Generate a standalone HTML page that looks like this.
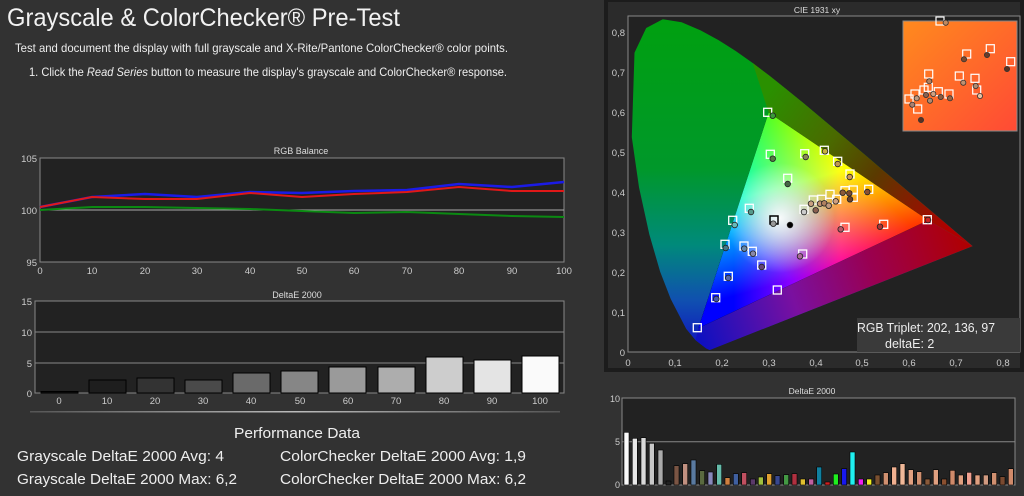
<!DOCTYPE html>
<html><head><meta charset="utf-8"><style>
html,body{margin:0;padding:0;background:#323232;width:1024px;height:496px;overflow:hidden}
svg{display:block}
text{font-family:"Liberation Sans",sans-serif}
</style></head><body>
<svg width="1024" height="496" viewBox="0 0 1024 496" xmlns="http://www.w3.org/2000/svg">
<defs>
<linearGradient id="lbase" gradientUnits="userSpaceOnUse" x1="0" y1="20" x2="0" y2="350"><stop offset="0" stop-color="#00a010"/><stop offset="0.45" stop-color="#00982a"/><stop offset="0.68" stop-color="#008a7a"/><stop offset="0.85" stop-color="#1050b0"/><stop offset="1" stop-color="#1010c0"/></linearGradient>
<linearGradient id="lright" gradientUnits="userSpaceOnUse" x1="770" y1="90" x2="950" y2="225"><stop offset="0" stop-color="#2a9000"/><stop offset="0.35" stop-color="#4a6a00"/><stop offset="0.6" stop-color="#5a3a00"/><stop offset="1" stop-color="#b00000"/></linearGradient>
<linearGradient id="lbot" gradientUnits="userSpaceOnUse" x1="700" y1="335" x2="970" y2="245"><stop offset="0" stop-color="#1010c0"/><stop offset="0.35" stop-color="#7a10a0"/><stop offset="0.65" stop-color="#9a0050"/><stop offset="1" stop-color="#b00000"/></linearGradient>
<linearGradient id="gR" gradientUnits="userSpaceOnUse" x1="928.2" y1="220.3" x2="733.5" y2="220.3"><stop offset="0" stop-color="#f00"/><stop offset="0.45" stop-color="#f00"/><stop offset="1" stop-color="#000"/></linearGradient>
<linearGradient id="gG" gradientUnits="userSpaceOnUse" x1="768.7" y1="112.6" x2="813.3" y2="274.2"><stop offset="0" stop-color="#0f0"/><stop offset="0.45" stop-color="#0f0"/><stop offset="1" stop-color="#000"/></linearGradient>
<linearGradient id="gB" gradientUnits="userSpaceOnUse" x1="698.4" y1="328.1" x2="848.5" y2="166.5"><stop offset="0" stop-color="#00f"/><stop offset="0.45" stop-color="#00f"/><stop offset="1" stop-color="#000"/></linearGradient>
<radialGradient id="wp" gradientUnits="userSpaceOnUse" cx="780" cy="218" r="55"><stop offset="0" stop-color="#fff" stop-opacity="0.95"/><stop offset="1" stop-color="#fff" stop-opacity="0"/></radialGradient>
<linearGradient id="ins" x1="0" y1="0" x2="1" y2="1"><stop offset="0" stop-color="#ff8a1e"/><stop offset="1" stop-color="#ff4a35"/></linearGradient>
<linearGradient id="sep" x1="0" x2="1"><stop offset="0" stop-color="#555"/><stop offset="0.5" stop-color="#bbb"/><stop offset="1" stop-color="#555"/></linearGradient>
</defs>

<text x="7" y="26" font-size="25" fill="#f2f2f2" textLength="393" lengthAdjust="spacingAndGlyphs">Grayscale &amp; ColorChecker® Pre-Test</text>
<text x="15" y="52" font-size="12" fill="#eee" textLength="493" lengthAdjust="spacingAndGlyphs">Test and document the display with full grayscale and X-Rite/Pantone ColorChecker® color points.</text>
<text x="29" y="76" font-size="12" fill="#eee" textLength="478" lengthAdjust="spacingAndGlyphs">1. Click the <tspan font-style="italic">Read Series</tspan> button to measure the display's grayscale and ColorChecker® response.</text>

<text x="301" y="154" font-size="9" fill="#ddd" text-anchor="middle">RGB Balance</text>
<rect x="40" y="158" width="524" height="104" fill="#222" stroke="#888" stroke-width="1"/>
<line x1="40" y1="210" x2="564" y2="210" stroke="#aaa" stroke-width="1"/>
<g font-size="9.5" fill="#ccc" text-anchor="end"><text x="37" y="162">105</text><text x="37" y="214">100</text><text x="37" y="266">95</text></g>
<g font-size="9.5" fill="#ccc" text-anchor="middle">
<text x="40" y="274">0</text><text x="92" y="274">10</text><text x="145" y="274">20</text><text x="197" y="274">30</text><text x="250" y="274">40</text><text x="302" y="274">50</text><text x="354" y="274">60</text><text x="407" y="274">70</text><text x="459" y="274">80</text><text x="512" y="274">90</text><text x="564" y="274">100</text></g>
<polyline fill="none" stroke="#0b8a12" stroke-width="2" points="40,210 92,207 145,207 197,208 250,209 302,211 354,213 407,212 459,214 512,216 564,217"/>
<polyline fill="none" stroke="#1b1be6" stroke-width="2.5" points="40,207 92,197 145,194 197,197 250,192 302,193 354,191 407,190 459,184 512,187 564,182"/>
<polyline fill="none" stroke="#e01818" stroke-width="2" points="40,207 92,197 145,199 197,199 250,193 302,197 354,194 407,192 459,187 512,191 564,191"/>

<text x="297" y="298" font-size="9" fill="#ddd" text-anchor="middle">DeltaE 2000</text>
<rect x="35" y="301" width="529" height="92" fill="#222" stroke="#888"/>
<g stroke="#888"><line x1="35" y1="332" x2="564" y2="332"/><line x1="35" y1="363" x2="564" y2="363"/></g>
<g font-size="9.5" fill="#ccc" text-anchor="end"><text x="32" y="305">15</text><text x="32" y="336">10</text><text x="32" y="367">5</text><text x="32" y="397">0</text></g>
<g stroke="#000" stroke-width="1">
<rect x="41" y="391.5" width="37" height="1.5" fill="#111"/>
<rect x="89" y="380" width="37" height="13" fill="#1e1e1e"/>
<rect x="137" y="378" width="37" height="15" fill="#333"/>
<rect x="185" y="380" width="37" height="13" fill="#4a4a4a"/>
<rect x="233" y="373" width="37" height="20" fill="#6a6a6a"/>
<rect x="281" y="371" width="37" height="22" fill="#868686"/>
<rect x="329" y="367" width="37" height="26" fill="#9a9a9a"/>
<rect x="378" y="367" width="37" height="26" fill="#adadad"/>
<rect x="426" y="357" width="37" height="36" fill="#cdcdcd"/>
<rect x="474" y="360" width="37" height="33" fill="#e4e4e4"/>
<rect x="522" y="356" width="37" height="37" fill="#fafafa"/>
</g>
<g font-size="9.5" fill="#ccc" text-anchor="middle">
<text x="59" y="404">0</text><text x="107" y="404">10</text><text x="155" y="404">20</text><text x="203" y="404">30</text><text x="251" y="404">40</text><text x="300" y="404">50</text><text x="348" y="404">60</text><text x="396" y="404">70</text><text x="444" y="404">80</text><text x="492" y="404">90</text><text x="540" y="404">100</text></g>
<rect x="30" y="411" width="530" height="1.5" fill="url(#sep)"/>

<text x="234" y="438" font-size="14.5" fill="#eee" textLength="126" lengthAdjust="spacingAndGlyphs">Performance Data</text>
<g font-size="14.5" fill="#eee">
<text x="17" y="461" textLength="207" lengthAdjust="spacingAndGlyphs">Grayscale DeltaE 2000 Avg:  4</text>
<text x="280" y="461" textLength="246" lengthAdjust="spacingAndGlyphs">ColorChecker DeltaE 2000 Avg:  1,9</text>
<text x="17" y="484" textLength="220" lengthAdjust="spacingAndGlyphs">Grayscale DeltaE 2000 Max: 6,2</text>
<text x="280" y="484" textLength="246" lengthAdjust="spacingAndGlyphs">ColorChecker DeltaE 2000 Max: 6,2</text>
</g>

<rect x="604" y="0" width="420" height="372" fill="#1c1c1c"/>
<rect x="608" y="2" width="412" height="366" fill="#2b2b2b"/>
<text x="817" y="13" font-size="8.5" fill="#ddd" text-anchor="middle">CIE 1931 xy</text>
<rect x="628" y="16" width="392" height="336" fill="#222" stroke="#888"/>
<path fill="url(#lbase)" d="M709.7,350 L706.1,348.4 L695.5,340.1 L686.2,328.9 L670.8,299.1 L660.2,271.9 L649.3,234.3 L639,187.3 L631.8,137.2 L634.5,52.7 L646.2,28 L662.8,19.3 L681.6,22.3 L700.6,30.4 L718.5,40.1 L735.7,51 L752.7,63 L769.5,75.8 L786.2,89.1 L803,102.8 L819.7,116.7 L836.3,130.7 L852.6,144.4 L868.4,157.8 L883.5,170.7 L897.8,182.7 L910.8,193.8 L922.1,203.4 L932,211.8 L940.3,218.7 L952.3,229 L972.6,246.1 Z"/>
<path fill="url(#lright)" d="M768.7,112.6 L752.7,63 L769.5,75.8 L786.2,89.1 L803,102.8 L819.7,116.7 L836.3,130.7 L852.6,144.4 L868.4,157.8 L883.5,170.7 L897.8,182.7 L910.8,193.8 L922.1,203.4 L932,211.8 L940.3,218.7 L952.3,229 L972.6,246.1 L928.2,220.3 Z"/>
<path fill="url(#lbot)" d="M698.4,328.1 L928.2,220.3 L972.6,246.1 L709.7,350 L706.1,348.4 L695.5,340.1 Z"/>
<g style="isolation:isolate">
<polygon points="928.2,220.3 768.7,112.6 698.4,328.1" fill="url(#gR)"/>
<polygon points="928.2,220.3 768.7,112.6 698.4,328.1" fill="url(#gG)" style="mix-blend-mode:screen"/>
<polygon points="928.2,220.3 768.7,112.6 698.4,328.1" fill="url(#gB)" style="mix-blend-mode:screen"/>
</g>
<clipPath id="tri"><polygon points="928.2,220.3 768.7,112.6 698.4,328.1"/></clipPath>
<rect x="700" y="110" width="230" height="220" fill="url(#wp)" clip-path="url(#tri)"/>
<g font-size="9.5" fill="#ccc" text-anchor="end">
<text x="625" y="36">0,8</text><text x="625" y="76">0,7</text><text x="625" y="116">0,6</text><text x="625" y="156">0,5</text><text x="625" y="196">0,4</text><text x="625" y="236">0,3</text><text x="625" y="276">0,2</text><text x="625" y="316">0,1</text><text x="625" y="356">0</text></g>
<g font-size="9.5" fill="#ccc" text-anchor="middle">
<text x="628" y="366">0</text><text x="675" y="366">0,1</text><text x="722" y="366">0,2</text><text x="769" y="366">0,3</text><text x="816" y="366">0,4</text><text x="862" y="366">0,5</text><text x="909" y="366">0,6</text><text x="956" y="366">0,7</text><text x="1003" y="366">0,8</text></g>
<g fill="none" stroke="#fff" stroke-width="1.3">
<rect x="763.7" y="108.3" width="8" height="8"/><rect x="766.3" y="150.3" width="8" height="8"/><rect x="800.7" y="149.7" width="8" height="8"/><rect x="820.3" y="146.3" width="8" height="8"/><rect x="833.7" y="157.3" width="8" height="8"/><rect x="846" y="170" width="8" height="8"/><rect x="783.7" y="174.3" width="8" height="8"/><rect x="745.3" y="204.3" width="8" height="8"/><rect x="728.7" y="216.3" width="8" height="8"/><rect x="721" y="240.3" width="8" height="8"/><rect x="724.3" y="272.3" width="8" height="8"/><rect x="711.7" y="293.7" width="8" height="8"/><rect x="693.3" y="323.7" width="8" height="8"/><rect x="740" y="242" width="8" height="8"/><rect x="748.3" y="247.3" width="8" height="8"/><rect x="757.7" y="261" width="8" height="8"/><rect x="773.3" y="286" width="8" height="8"/><rect x="798.7" y="250" width="8" height="8"/><rect x="841" y="223.3" width="8" height="8"/><rect x="879.7" y="220.3" width="8" height="8"/><rect x="923.3" y="215.7" width="8" height="8"/><rect x="800" y="205.3" width="8" height="8"/><rect x="809.3" y="196" width="8" height="8"/><rect x="817.7" y="195.3" width="8" height="8"/><rect x="826" y="190.3" width="8" height="8"/><rect x="832.7" y="195.3" width="8" height="8"/><rect x="841" y="186.7" width="8" height="8"/><rect x="849.3" y="186" width="8" height="8"/><rect x="849.3" y="193.3" width="8" height="8"/><rect x="864.7" y="185.3" width="8" height="8"/>
</g>
<rect x="770" y="216" width="8" height="8" fill="none" stroke="#000" stroke-width="1.5"/>
<g stroke="#222" stroke-width="0.8">
<circle cx="772.7" cy="115.7" r="2.8" fill="#3a9a3a"/><circle cx="772.7" cy="158.7" r="2.8" fill="#557744"/><circle cx="805.7" cy="157" r="2.8" fill="#888855"/><circle cx="825" cy="151.3" r="2.8" fill="#c8b040"/><circle cx="837.7" cy="164" r="2.8" fill="#c09a50"/><circle cx="849.7" cy="177" r="2.8" fill="#d09a50"/><circle cx="787.7" cy="184" r="2.8" fill="#446644"/><circle cx="751" cy="212" r="2.8" fill="#55998a"/><circle cx="734.7" cy="225" r="2.8" fill="#66bbbb"/><circle cx="725.7" cy="248" r="2.8" fill="#447788"/><circle cx="728.3" cy="278" r="2.8" fill="#5566aa"/><circle cx="716.3" cy="299" r="2.8" fill="#4455aa"/><circle cx="744.3" cy="248.7" r="2.8" fill="#6688aa"/><circle cx="753" cy="253.7" r="2.8" fill="#8888aa"/><circle cx="761.7" cy="267" r="2.8" fill="#664477"/><circle cx="800" cy="256.3" r="2.8" fill="#aa6699"/><circle cx="840.7" cy="229.3" r="2.8" fill="#bb5566"/><circle cx="880" cy="226.7" r="2.8" fill="#aa3333"/><circle cx="928" cy="220" r="2.8" fill="#cc2222"/><circle cx="804" cy="212" r="2.8" fill="#ccc"/><circle cx="811" cy="203.7" r="2.8" fill="#c8a080"/><circle cx="815.7" cy="210.3" r="2.8" fill="#8a6050"/><circle cx="820" cy="203.7" r="2.8" fill="#c09070"/><circle cx="824.3" cy="203.3" r="2.8" fill="#b08060"/><circle cx="828.7" cy="205.7" r="2.8" fill="#c09a80"/><circle cx="835.7" cy="201.3" r="2.8" fill="#d0a080"/><circle cx="842.7" cy="192.7" r="2.8" fill="#8a5a3a"/><circle cx="849.3" cy="193.3" r="2.8" fill="#7a4a30"/><circle cx="850" cy="199.3" r="2.8" fill="#6a4028"/><circle cx="867.3" cy="192" r="2.8" fill="#8a5030"/><circle cx="773.3" cy="223.7" r="2.8" fill="#999"/><circle cx="790" cy="225" r="2.8" fill="#000"/>
</g>
<rect x="903" y="21" width="114" height="110" fill="url(#ins)" stroke="#888"/>
<g fill="none" stroke="#fff" stroke-width="1.2">
<rect x="936" y="17" width="8" height="8"/><rect x="962.7" y="50" width="8" height="8"/><rect x="986.3" y="44.7" width="8" height="8"/><rect x="1006.7" y="57.7" width="8" height="8"/><rect x="924.7" y="70" width="8" height="8"/><rect x="955.3" y="72" width="8" height="8"/><rect x="971" y="74.3" width="8" height="8"/><rect x="905" y="95" width="8" height="8"/><rect x="911" y="90" width="8" height="8"/><rect x="920" y="86" width="8" height="8"/><rect x="924.3" y="83.3" width="8" height="8"/><rect x="934.3" y="87.7" width="8" height="8"/><rect x="945" y="90" width="8" height="8"/><rect x="913.7" y="105" width="8" height="8"/><rect x="972.7" y="86" width="8" height="8"/>
</g>
<g stroke="#333" stroke-width="0.8">
<circle cx="945.7" cy="22.7" r="2.6" fill="#c08a60"/><circle cx="964" cy="59.3" r="2.6" fill="#7a4a30"/><circle cx="987" cy="55" r="2.6" fill="#6a3a28"/><circle cx="1007" cy="69" r="2.6" fill="#5a3020"/><circle cx="929.3" cy="81.3" r="2.6" fill="#b08060"/><circle cx="963.3" cy="82.7" r="2.6" fill="#c09070"/><circle cx="975.7" cy="86" r="2.6" fill="#b08a70"/><circle cx="916.7" cy="98.3" r="2.6" fill="#c09a80"/><circle cx="912.3" cy="104.7" r="2.6" fill="#aa8070"/><circle cx="926" cy="95" r="2.6" fill="#8a6050"/><circle cx="930" cy="100.7" r="2.6" fill="#b08a70"/><circle cx="933.3" cy="94" r="2.6" fill="#d0a080"/><circle cx="940.7" cy="97" r="2.6" fill="#8a5a40"/><circle cx="950" cy="98.3" r="2.6" fill="#9a6040"/><circle cx="980" cy="96" r="2.6" fill="#e8c0a0"/><circle cx="921" cy="120" r="2.6" fill="#5a3020"/>
</g>
<rect x="857" y="318" width="163" height="34" fill="#3a3a3a"/>
<text x="857" y="332" font-size="12.5" fill="#eee" textLength="138" lengthAdjust="spacingAndGlyphs">RGB Triplet: 202, 136, 97</text>
<text x="885" y="348" font-size="12.5" fill="#eee">deltaE: 2</text>

<text x="812" y="394" font-size="8.5" fill="#ddd" text-anchor="middle">DeltaE 2000</text>
<rect x="622" y="398" width="393" height="87" fill="#222" stroke="#888"/>
<line x1="622" y1="441.7" x2="1015" y2="441.7" stroke="#888"/>
<g font-size="9" fill="#ccc" text-anchor="end"><text x="620" y="402">10</text><text x="620" y="445">5</text><text x="620" y="488">0</text></g>
<g stroke="#000" stroke-width="0.6">
<rect x="624" y="432.3" width="5" height="52.7" fill="#fafafa"/>
<rect x="632.3" y="438.3" width="5" height="46.7" fill="#e8e8e8"/>
<rect x="641" y="437.7" width="5" height="47.3" fill="#dadada"/>
<rect x="649.3" y="443.3" width="5" height="41.7" fill="#c8c8c8"/>
<rect x="658" y="450" width="5" height="35" fill="#aaa"/>
<rect x="666" y="481" width="5" height="4" fill="#222"/>
<rect x="674" y="465.7" width="5" height="19.3" fill="#7a5544"/>
<rect x="682.7" y="463.7" width="5" height="21.3" fill="#c09080"/>
<rect x="691" y="460" width="5" height="25" fill="#5a7aa0"/>
<rect x="699.7" y="470.7" width="5" height="14.3" fill="#5a6a40"/>
<rect x="708" y="472" width="5" height="13" fill="#8888bb"/>
<rect x="716.7" y="464.3" width="5" height="20.7" fill="#66bbaa"/>
<rect x="725" y="477.7" width="5" height="7.3" fill="#d08040"/>
<rect x="733.3" y="473.7" width="5" height="11.3" fill="#4060a0"/>
<rect x="741.7" y="472.7" width="5" height="12.3" fill="#c05060"/>
<rect x="750.3" y="479" width="5" height="6" fill="#5a3a6a"/>
<rect x="758.3" y="477" width="5" height="8" fill="#a0c040"/>
<rect x="766.7" y="473.7" width="5" height="11.3" fill="#e0a030"/>
<rect x="775" y="475.7" width="5" height="9.3" fill="#384890"/>
<rect x="783.7" y="474.7" width="5" height="10.3" fill="#449944"/>
<rect x="792" y="473.7" width="5" height="11.3" fill="#b03040"/>
<rect x="800.3" y="479" width="5" height="6" fill="#e0c030"/>
<rect x="808.7" y="479" width="5" height="6" fill="#c060a0"/>
<rect x="816.7" y="467" width="5" height="18" fill="#1080a0"/>
<rect x="825" y="482" width="5" height="3" fill="#d02020"/>
<rect x="833.3" y="474" width="5" height="11" fill="#20ee20"/>
<rect x="841.7" y="468.7" width="5" height="16.3" fill="#1818ee"/>
<rect x="850" y="452" width="5" height="33" fill="#20f0f0"/>
<rect x="858.3" y="479" width="5" height="6" fill="#ee20ee"/>
<rect x="866.7" y="479" width="5" height="6" fill="#eeee20"/>
<rect x="875" y="475" width="5" height="10" fill="#7a5030"/>
<rect x="883.3" y="472.7" width="5" height="12.3" fill="#d09070"/>
<rect x="891.7" y="467" width="5" height="18" fill="#f0b090"/>
<rect x="900" y="463.7" width="5" height="21.3" fill="#f0b898"/>
<rect x="908.3" y="469.7" width="5" height="15.3" fill="#e0a080"/>
<rect x="916.7" y="471.7" width="5" height="13.3" fill="#d09070"/>
<rect x="925" y="479" width="5" height="6" fill="#8a5a3a"/>
<rect x="933.3" y="469.7" width="5" height="15.3" fill="#e0a080"/>
<rect x="941.7" y="479" width="5" height="6" fill="#8a5030"/>
<rect x="950" y="470.3" width="5" height="14.7" fill="#d08a6a"/>
<rect x="958.3" y="475" width="5" height="10" fill="#e0a080"/>
<rect x="966.7" y="472.3" width="5" height="12.7" fill="#f0a090"/>
<rect x="975" y="475" width="5" height="10" fill="#e0a080"/>
<rect x="983.3" y="475" width="5" height="10" fill="#d09a80"/>
<rect x="991.7" y="472.7" width="5" height="12.3" fill="#d09070"/>
<rect x="1000" y="476.7" width="5" height="8.3" fill="#7a4a30"/>
<rect x="1008.3" y="468.7" width="5" height="16.3" fill="#d08a6a"/>
</g>
</svg>
</body></html>
